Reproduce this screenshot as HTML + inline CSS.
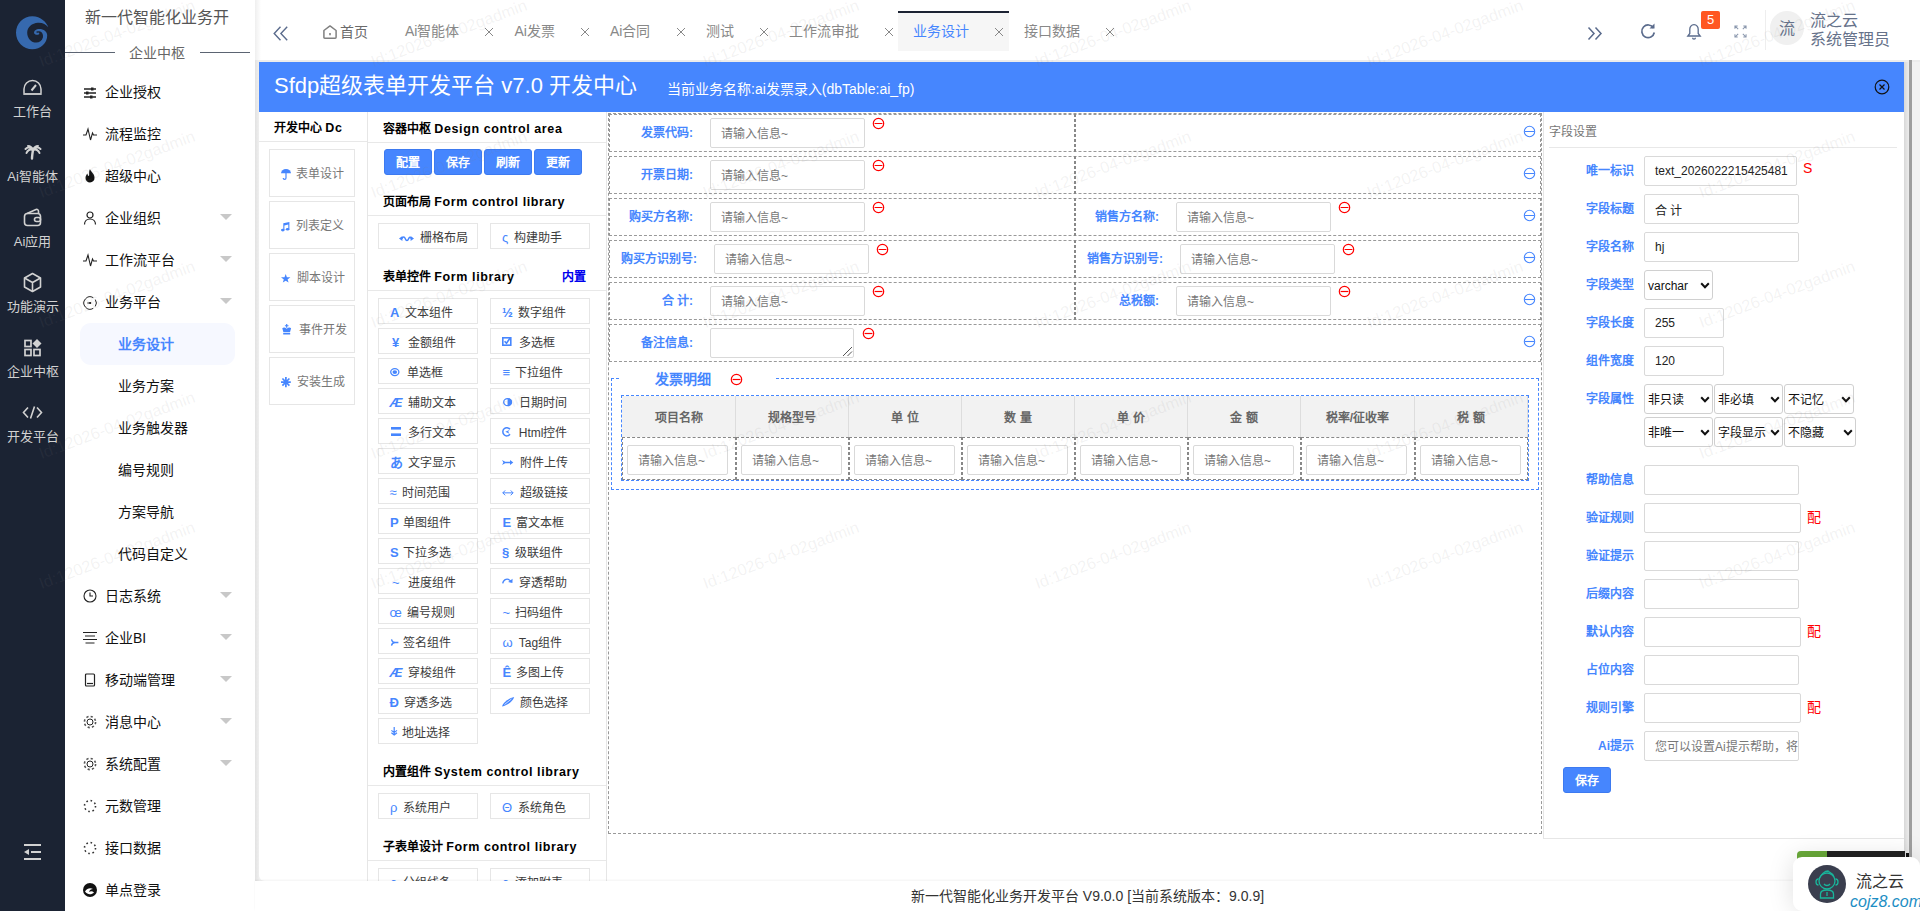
<!DOCTYPE html>
<html lang="zh-CN">
<head>
<meta charset="utf-8">
<title>Sfdp</title>
<style>
*{box-sizing:border-box}
html,body{margin:0;padding:0}
html{overflow:hidden;width:1920px;height:911px}
body{width:1920px;height:911px;overflow:hidden;position:relative;background:#f2f2f2;font-family:"Liberation Sans",sans-serif;font-size:12px;color:#333}
.abs{position:absolute}
svg{display:block;overflow:visible}
/* dark sidebar */
#dark{position:absolute;left:0;top:0;width:65px;height:911px;background:#1b2333}
#dark .it{position:absolute;left:0;width:65px;text-align:center;color:#d2d2d2;font-size:13px;line-height:16px;margin-top:1px;white-space:nowrap}
#dark .ic{position:absolute;left:22px;width:21px;height:21px}
/* second sidebar */
#side2{position:absolute;left:65px;top:0;width:190px;height:911px;background:#fff;overflow:hidden}
#side2 .ttl{position:absolute;left:20px;top:7px;font-size:16px;line-height:22px;color:#555;white-space:nowrap}
#side2 .dv{position:absolute;top:52px;height:1px;background:#5b6472}
#side2 .dvt{position:absolute;left:-3px;width:190px;top:44px;text-align:center;font-size:14px;line-height:18px;color:#666}
.mi{position:absolute;left:0;width:190px;height:42px;line-height:42px;font-size:14px;color:#111;white-space:nowrap}
.mi .t{position:absolute;left:40px;top:0}
.mi.sub .t{left:53px}
.mi .i{position:absolute;left:18px;top:14px;width:14px;height:14px}
.mi .ar{position:absolute;left:155px;top:17px;width:0;height:0;border-left:6px solid transparent;border-right:6px solid transparent;border-top:6px solid #c8c8c8}
.mi.act{color:#4686fe;font-weight:bold}
.mi.act:before{content:"";position:absolute;left:15px;top:0px;width:155px;height:42px;border-radius:11px;background:#f6f8ff}
/* tabs */
#tabs{position:absolute;left:255px;top:0;width:1665px;height:60px;background:#fff}
.tab{position:absolute;top:11px;height:40px;line-height:40px;font-size:14px;color:#888;white-space:nowrap;padding-left:15px}
.tab.on{background:#f6f6f6;color:#4686fe;border-top:2px solid #1c2333;line-height:36px}
.tab .x{position:absolute;right:5px;top:1px;width:10px;height:40px}
.tab.on .x{top:-1px}
/* main */
#main{position:absolute;left:259px;top:62px;width:1645px;height:819px;background:#fff;overflow:hidden;border-radius:0 0 0 6px}
#bar{position:absolute;left:0;top:0;width:1645px;height:50px;background:#4686fe;color:#fff}
.hd{position:absolute;font-weight:bold;font-size:12px;line-height:16px;color:#000;white-space:nowrap}
.hl{position:absolute;height:1px;background:#e8e8e8}
.vl{position:absolute;width:1px;background:#e6e6e6}
.lb{position:absolute;left:10px;width:86px;height:48px;border:1px solid #e6e6e6;line-height:46px;color:#777;font-size:12px;white-space:nowrap}
.lb i{position:absolute;left:11px;top:1px;font-style:normal;color:#4686fe;font-size:12px}
.lb span{position:absolute;left:27px;top:1px}
.bb{position:absolute;top:87px;width:48px;height:26px;background:#4686fe;border:1px solid #3d7af0;border-radius:3px;color:#fff;font-weight:bold;font-size:12px;line-height:26px;text-align:center}
.cb{position:absolute;width:100px;height:26px;border:1px solid #e6e6e6;line-height:24px;font-size:12px;color:#3c3c3c;white-space:nowrap;overflow:hidden}
.cb i{font-style:normal;color:#4686fe;font-size:13px}
.cb i.b{font-weight:bold}
.cb i.n{font-weight:normal;font-size:13px}
.cb i.it{font-style:italic}
.en{font-size:12.500px;letter-spacing:.6px}

#cv{position:absolute;left:349px;top:51px;width:934px;height:721px;border:1px dashed #999}
#cv>*{margin-left:-350px;margin-top:-52px}
.rw{position:absolute;left:350px;width:932px;height:38px;border:1px dashed #999}
.rw .cl{position:absolute;left:-1px;top:-1px;width:466px;height:38px;border-right:1px dashed #888}
.rw .cr{position:absolute;left:465px;top:-1px;width:466px;height:38px;border-left:1px dashed #888}
.fl{position:absolute;width:100px;text-align:right;font-weight:bold;font-size:12px;line-height:16px;color:#4686fe;white-space:nowrap}
.fi{position:absolute;width:155px;height:30px;border:1px solid #d9d9d9;border-radius:2px;background:#fff;font-size:12px;line-height:30px;color:#777;padding-left:10px;white-space:nowrap;overflow:hidden;font-weight:normal}
.fs{position:absolute;left:352px;top:316px;width:928px;height:112px;border:1px dashed #4686fe}
.tb{position:absolute;left:362px;top:333px;width:908px;height:86px;border:1px dashed #4686fe}
.tb .th{position:absolute;top:0;height:41px;background:#f2f2f2;border-right:1px solid #ddd;text-align:center;line-height:44px;font-weight:bold;color:#666;font-size:12px;margin:0}
.tb .td{position:absolute;top:41px;height:43px;border:1px dashed #888;margin:0}


#rp{position:absolute;left:1284px;top:0;width:361px;height:777px;border-left:1px solid #e6e6e6;border-bottom:1px solid #e6e6e6}
#bar{z-index:5}
.rl{position:absolute;left:0;width:90px;margin-top:1px;text-align:right;font-weight:bold;font-size:12px;line-height:16px;color:#4686fe;white-space:nowrap}
.ri{position:absolute;left:100px;height:30px;border:1px solid #d9d9d9;border-radius:2px;background:#fff;font-size:12px;line-height:28px;color:#222;padding-left:10px;white-space:nowrap;overflow:hidden}
.ri.ph{color:#777}
.rs{position:absolute;height:30px;border:1px solid #d0d0d0;border-radius:3px;background:#fff;font-size:12px;line-height:30px;color:#111;padding-left:3px;white-space:nowrap;overflow:hidden}
#foot{position:absolute;left:255px;top:881px;width:1665px;height:30px;background:#fff;text-align:center;font-size:14px;line-height:30px;color:#333;box-shadow:0 -1px 2px rgba(0,0,0,.05)}
.wm{position:absolute;font-size:16.400px;line-height:20px;height:20px;color:rgba(130,130,130,.1);transform:rotate(-20.400deg);transform-origin:0 100%;white-space:nowrap;pointer-events:none;z-index:50}

.ri.cj{line-height:32px}.ri.ph{line-height:30px}
</style>
</head>
<body>
<div id="dark">
<svg class="abs" style="left:15px;top:15px" width="34" height="34" viewBox="0 0 34 34"><path d="M 33.3,12.2 C 31.4,7.3 25.9,1.2 17.4,1.2 C 8.4,1.2 1.0,8.6 1.0,17.7 C 1.0,26.8 8.4,34.2 17.4,34.2 C 25.4,34.2 32.2,28.1 32.2,20.4 C 32.2,16.6 28.7,14.1 24.3,14.1 C 21.0,14.1 18.8,16.1 19.1,18.0 C 19.3,19.6 22.1,20.4 24.0,19.3 C 24.6,18.8 24.3,17.7 23.5,17.4 C 22.6,18.0 21.3,17.7 21.3,16.9 C 21.5,16.1 23.7,16.1 25.4,16.6 C 27.6,17.7 28.4,20.4 27.9,22.6 C 27.0,25.9 24.3,27.6 21.5,27.6 C 16.1,27.6 12.2,23.2 12.2,17.7 C 12.2,12.2 17.1,8.1 22.9,7.8 C 27.6,7.5 30.9,9.5 33.3,12.2 Z" fill="#3669ae"/></svg>
<svg class="ic" style="top:78px" viewBox="0 0 21 21" fill="none" stroke="#d2d2d2" stroke-width="1.500"><path d="M2 15.300V11a8.500 8.500 0 0 1 17 0v4.300"/><path d="M1.300 16h18.400" stroke-width="1.800"/><path d="M9.500 12.500l4.500-5.500" stroke-width="2"/></svg>
<div class="it" style="top:103px">工作台</div>
<svg class="ic" style="top:142px" viewBox="0 0 21 21" fill="none" stroke="#d2d2d2" stroke-width="2" stroke-linecap="round"><path d="M11 8C10.500 11 10 14 10 16.500" stroke-width="2.400"/><path d="M11 8C8.500 5 5.500 5 3.500 7M11 8C8 7 5.500 8 4.500 11M11 8C10 5.500 8 4 6 4M11 8c1-2.500 3-4 5-4M11 8c2.500-3 5.500-3 7.500-1M11 8c3-1 5.500 0 6.500 3"/></svg>
<div class="it" style="top:168px">Ai智能体</div>
<svg class="ic" style="top:207px" viewBox="0 0 21 21" fill="none" stroke="#d2d2d2" stroke-width="1.600"><rect x="2.500" y="6.500" width="16" height="12" rx="3"/><path d="M5 6.500 14 2.500c1.500-.5 2.500.5 2.500 2v2"/><rect x="12.500" y="10.500" width="6" height="4" rx="2"/></svg>
<div class="it" style="top:233px">Ai应用</div>
<svg class="ic" style="top:272px" viewBox="0 0 21 21" fill="none" stroke="#d2d2d2" stroke-width="1.600" stroke-linejoin="round"><path d="M10.500 1.500l8 4.500v9l-8 4.500-8-4.500V6z"/><path d="M2.500 6l8 4.500 8-4.500M10.500 10.500v9"/></svg>
<div class="it" style="top:298px">功能演示</div>
<svg class="ic" style="top:337px" viewBox="0 0 21 21" fill="none" stroke="#d2d2d2" stroke-width="1.700"><rect x="3" y="3.500" width="6" height="6"/><rect x="3" y="12.500" width="6" height="6"/><rect x="12" y="12.500" width="6" height="6"/><path d="M15 2l4.500 4.500L15 11l-4.500-4.500z" fill="#d2d2d2" stroke="none"/></svg>
<div class="it" style="top:363px">企业中枢</div>
<svg class="ic" style="top:402px" viewBox="0 0 21 21" fill="none" stroke="#d2d2d2" stroke-width="1.600"><path d="M6 5.500L1.500 10.500 6 15.500M15 5.500l4.500 5-4.500 5M12.500 4.500l-4 12"/></svg>
<div class="it" style="top:428px">开发平台</div>
<svg class="abs" style="left:23px;top:843px" width="19" height="18" viewBox="0 0 19 18" fill="#d2d2d2"><rect x="1" y="1" width="17" height="2"/><rect x="8" y="8" width="10" height="2"/><rect x="1" y="15" width="17" height="2"/><path d="M1 9l5-3v6z"/></svg>
</div>
<div id="side2">
<div class="ttl">新一代智能化业务开</div>
<div class="dv" style="left:0;width:50px"></div><div class="dv" style="left:135px;width:50px"></div><div class="dvt">企业中枢</div>
<div class="mi" style="top:71px"><svg class="i" style="top:15px" viewBox="0 0 14 14" stroke="#222" fill="none" stroke-width="1.2"><path d="M1 3h12M1 7h12M1 11h12" stroke-width="1.3"/><rect x="8" y="1.500" width="2.500" height="3" fill="#222" stroke="none"/><rect x="3" y="5.500" width="2.500" height="3" fill="#222" stroke="none"/><rect x="7" y="9.500" width="2.500" height="3" fill="#222" stroke="none"/></svg><span class="t">企业授权</span></div>
<div class="mi" style="top:113px"><svg class="i" viewBox="0 0 14 14" stroke="#222" fill="none" stroke-width="1.2"><path d="M0 8h3l2-6 2.500 11 2-7 1 2H14" stroke-width="1.100"/></svg><span class="t">流程监控</span></div>
<div class="mi" style="top:155px"><svg class="i" viewBox="0 0 14 14"><path d="M7 0c.5 2.500 4.500 4.500 4.500 8.500A4.500 4.500 0 0 1 7 13.500 4.500 4.500 0 0 1 2.500 9C2.500 7 3.500 5.500 4.500 4.500 4.500 6 5 7 6 7 6.500 5 5.500 2.500 7 0z" fill="#111"/></svg><span class="t">超级中心</span></div>
<div class="mi" style="top:197px"><svg class="i" viewBox="0 0 14 14" stroke="#222" fill="none" stroke-width="1.2"><circle cx="7" cy="4" r="3"/><path d="M1.500 13.500c0-3.500 2.500-5.500 5.500-5.500s5.500 2 5.500 5.500"/></svg><span class="t">企业组织</span><span class="ar"></span></div>
<div class="mi" style="top:239px"><svg class="i" viewBox="0 0 14 14" stroke="#222" fill="none" stroke-width="1.2"><path d="M0 8h3l2-6 2.500 11 2-7 1 2H14" stroke-width="1.100"/></svg><span class="t">工作流平台</span><span class="ar"></span></div>
<div class="mi" style="top:281px"><svg class="i" style="top:15px" viewBox="0 0 14 14" stroke="#222" fill="none" stroke-width="1.2"><path d="M10.300 1.700A6.200 6.200 0 1 0 10.300 12.300M12.300 3.600A6.200 6.200 0 0 1 12.300 10.400" stroke-width="1"/><path d="M4.300 7h2.700" stroke-width="1"/><circle cx="7.200" cy="7" r="1.100" fill="#111" stroke="none"/></svg><span class="t">业务平台</span><span class="ar"></span></div>
<div class="mi sub act" style="top:323px"><span class="t">业务设计</span></div>
<div class="mi sub" style="top:365px"><span class="t">业务方案</span></div>
<div class="mi sub" style="top:407px"><span class="t">业务触发器</span></div>
<div class="mi sub" style="top:449px"><span class="t">编号规则</span></div>
<div class="mi sub" style="top:491px"><span class="t">方案导航</span></div>
<div class="mi sub" style="top:533px"><span class="t">代码自定义</span></div>
<div class="mi" style="top:575px"><svg class="i" viewBox="0 0 14 14" stroke="#222" fill="none" stroke-width="1.2"><circle cx="7" cy="7" r="6" stroke-width="1.100"/><path d="M7 3.500V7h3" stroke-width="1.100"/></svg><span class="t">日志系统</span><span class="ar"></span></div>
<div class="mi" style="top:617px"><svg class="i" viewBox="0 0 14 14" stroke="#222" fill="none" stroke-width="1.2"><path d="M0 1.500h14M2 5h10M0 8.500h14M2.500 12h9" stroke-width="1.100"/></svg><span class="t">企业BI</span><span class="ar"></span></div>
<div class="mi" style="top:659px"><svg class="i" viewBox="0 0 14 14" stroke="#222" fill="none" stroke-width="1.2"><rect x="2.500" y="1" width="9" height="12" rx="1" stroke-width="1.200"/><path d="M4 10.500h6" stroke-width="1.200"/></svg><span class="t">移动端管理</span><span class="ar"></span></div>
<div class="mi" style="top:701px"><svg class="i" viewBox="0 0 14 14" stroke="#222" fill="none" stroke-width="1.2"><circle cx="7" cy="7" r="3" stroke-width="1"/><circle cx="7" cy="7" r="5.600" stroke-width="1.600" stroke-dasharray="2.200 2.200" stroke="#555"/></svg><span class="t">消息中心</span><span class="ar"></span></div>
<div class="mi" style="top:743px"><svg class="i" viewBox="0 0 14 14" stroke="#222" fill="none" stroke-width="1.2"><circle cx="7" cy="7" r="3" stroke-width="1"/><circle cx="7" cy="7" r="5.600" stroke-width="1.600" stroke-dasharray="2.200 2.200" stroke="#555"/></svg><span class="t">系统配置</span><span class="ar"></span></div>
<div class="mi" style="top:785px"><svg class="i" viewBox="0 0 14 14"><circle cx="7" cy="7" r="5.500" fill="none" stroke="#333" stroke-width="1.600" stroke-dasharray="1.600 2.700"/></svg><span class="t">元数管理</span></div>
<div class="mi" style="top:827px"><svg class="i" viewBox="0 0 14 14"><circle cx="7" cy="7" r="5.500" fill="none" stroke="#333" stroke-width="1.600" stroke-dasharray="1.600 2.700"/></svg><span class="t">接口数据</span></div>
<div class="mi" style="top:869px"><svg class="i" viewBox="0 0 14 14"><circle cx="7" cy="7" r="7" fill="#111"/><path d="M2 8.500c2-3 5-4 8-2.500-2 0-3.500 1-4 3 1.500-1 3.500-1 5 .5-2.500 2.500-6.500 2.500-9-1z" fill="#fff"/></svg><span class="t">单点登录</span></div>
</div>
<div id="tabs">
<svg class="abs" style="left:17.500px;top:25.500px" width="15" height="15" viewBox="0 0 15 15" fill="none" stroke="#5a6b8c" stroke-width="1.400"><path d="M7.500 .8L1.200 7.500l6.300 6.700M14.200 .8L7.900 7.500l6.300 6.700"/></svg>
<svg class="abs" style="left:68px;top:25px" width="14" height="14" viewBox="0 0 14 14" fill="none" stroke="#808080" stroke-width="1.500" stroke-linejoin="round"><path d="M.9 5.500L7 .9l6.100 4.600v6.800q0 .9-.9.900H1.800q-.9 0-.9-.9z"/><path d="M7 8v2.200" stroke-width="1.600"/></svg>
<div class="abs" style="left:85px;top:22px;font-size:14px;line-height:20px;color:#6a6a6a;white-space:nowrap">首页</div>
<div class="tab" style="left:135px;width:109px">Ai智能体<svg class="x" viewBox="0 0 10 40"><path d="M1 16l8 8M9 16l-8 8" stroke="#888" stroke-width="1" fill="none"/></svg></div>
<div class="tab" style="left:244.5px;width:95.5px">Ai发票<svg class="x" viewBox="0 0 10 40"><path d="M1 16l8 8M9 16l-8 8" stroke="#888" stroke-width="1" fill="none"/></svg></div>
<div class="tab" style="left:340px;width:95.5px">Ai合同<svg class="x" viewBox="0 0 10 40"><path d="M1 16l8 8M9 16l-8 8" stroke="#888" stroke-width="1" fill="none"/></svg></div>
<div class="tab" style="left:435.5px;width:83px">测试<svg class="x" viewBox="0 0 10 40"><path d="M1 16l8 8M9 16l-8 8" stroke="#888" stroke-width="1" fill="none"/></svg></div>
<div class="tab" style="left:518.5px;width:125px">工作流审批<svg class="x" viewBox="0 0 10 40"><path d="M1 16l8 8M9 16l-8 8" stroke="#888" stroke-width="1" fill="none"/></svg></div>
<div class="tab on" style="left:643px;width:111px">业务设计<svg class="x" viewBox="0 0 10 40"><path d="M1 16l8 8M9 16l-8 8" stroke="#888" stroke-width="1" fill="none"/></svg></div>
<div class="tab" style="left:754px;width:111px">接口数据<svg class="x" viewBox="0 0 10 40"><path d="M1 16l8 8M9 16l-8 8" stroke="#888" stroke-width="1" fill="none"/></svg></div>
<svg class="abs" style="left:1332px;top:26px" width="16" height="15" viewBox="0 0 16 15" fill="none" stroke="#5a6b8c" stroke-width="1.500"><path d="M1.500 1.500L7 7.500 1.500 13.500M8.500 1.500l5.500 6-5.500 6"/></svg>
<svg class="abs" style="left:1384px;top:22px" width="18" height="18" viewBox="0 0 18 18" fill="none" stroke="#5a6b8c" stroke-width="1.700"><path d="M14.500 6A6.300 6.300 0 1 0 15.300 10.500"/><path d="M15.500 1.500v5h-5z" fill="#5a6b8c" stroke="none"/></svg>
<svg class="abs" style="left:1431px;top:23px" width="16" height="17" viewBox="0 0 16 17" fill="none" stroke="#5a6b8c" stroke-width="1.300"><path d="M8 1.700C5.300 1.700 3.800 3.900 3.800 6.200v4.300L1.800 13h12.400l-2-2.500V6.200c0-2.300-1.500-4.500-4.200-4.500z"/><path d="M6.600 14.700a1.400 1.400 0 0 0 2.800 0"/></svg>
<div class="abs" style="left:1446px;top:11px;width:19px;height:18px;background:#ff5722;border-radius:2px;color:#fff;font-size:13px;line-height:18px;text-align:center">5</div>
<svg class="abs" style="left:1478.500px;top:24.500px" width="13" height="13" viewBox="0 0 14 14" fill="none" stroke="#8a97ad" stroke-width="1.100"><path d="M1 4V1h3M10 1h3v3M13 10v3h-3M4 13H1v-3M1 1l3.500 3.500M13 1L9.500 4.500M13 13L9.500 9.500M1 13l3.500-3.500"/></svg>
<div class="abs" style="left:1510px;top:10px;width:1px;height:40px;background:#eee"></div>
<div class="abs" style="left:1515px;top:11px;width:34px;height:34px;border-radius:17px;background:#f0f0f0;color:#66728a;font-size:16px;line-height:35px;text-align:center">流</div>
<div class="abs" style="left:1555px;top:11px;font-size:16px;line-height:19px;color:#66728a;white-space:nowrap">流之云<br>系统管理员</div>
</div>
<div id="main">
<div id="bar"><div class="abs" style="left:15px;top:10px;font-size:22px;line-height:28px;white-space:nowrap">Sfdp超级表单开发平台 v7.0 开发中心</div><div class="abs" style="left:408px;top:18px;font-size:14px;line-height:18px;white-space:nowrap">当前业务名称:ai发票录入(dbTable:ai_fp)</div><svg class="abs" style="left:1615px;top:17px" width="16" height="16" viewBox="0 0 16 16" fill="none" stroke="#111" stroke-width="1.200"><circle cx="8" cy="8" r="6.800"/><path d="M5.500 5.500l5 5M10.500 5.500l-5 5"/></svg></div>
<div class="hd" style="left:15px;top:58px">开发中心 <span class="en">Dc</span></div>
<div class="hl" style="left:0;top:79px;width:108px"></div><div class="vl" style="left:108px;top:50px;height:769px"></div>
<div class="lb" style="top:87px"><svg class="abs" style="left:11px;top:19px" width="10" height="11" viewBox="0 0 10 11"><path d="M0 4.300a5 4.300 0 0 1 10 0z" fill="#4686fe"/><path d="M5 4v5a1.400 1.400 0 0 1-2.800 0" fill="none" stroke="#4686fe" stroke-width="1.200"/></svg><span style="left:26px">表单设计</span></div>
<div class="lb" style="top:139px"><svg class="abs" style="left:11.400px;top:19.500px" width="8.400" height="9.400" viewBox="0 0 8.400 9.400" fill="#4686fe"><path d="M2.300 1.300L8.400 0v7.300H7.300V2.600L3.400 3.400v4.800H2.300z"/><ellipse cx="1.800" cy="8.100" rx="1.800" ry="1.300"/><ellipse cx="6.600" cy="7.200" rx="1.800" ry="1.300"/></svg><span style="left:26px">列表定义</span></div>
<div class="lb" style="top:191px"><svg class="abs" style="left:11.400px;top:19.500px" width="9.400" height="8.600" viewBox="0 0 9.400 8.600" fill="#4686fe"><path d="M4.700 0l1.200 3.200 3.500.1-2.800 2.100 1 3.200-2.900-1.900-2.900 1.900 1-3.200L0 3.300l3.500-.1z"/></svg><span style="left:26.700000000000003px">脚本设计</span></div>
<div class="lb" style="top:243px"><svg class="abs" style="left:12.400px;top:17.500px" width="9.400" height="10.500" viewBox="0 0 9.400 10.500" fill="#4686fe"><path d="M4.100 0h1.200v1.200h1.200v1.100H5.300v1.400H4.100V2.300H2.900V1.200h1.200zM.3 4.200C1.500 3.200 3.300 3.400 4.700 4.800 6.100 3.400 7.900 3.200 9.100 4.200L8 8.300H1.400zM1.200 8.900h7v1.600h-7z"/></svg><span style="left:29px">事件开发</span></div>
<div class="lb" style="top:295px"><svg class="abs" style="left:11.400px;top:18.700px" width="9.800" height="10.200" viewBox="0 0 9.800 10.200" fill="none" stroke="#4686fe" stroke-width="1.700"><path d="M4.900 0v10.200M0 5.100h9.800M1.400 1.500l7 7.200M8.400 1.500l-7 7.200"/></svg><span style="left:27px">安装生成</span></div>
<div class="hd" style="left:124px;top:59px">容器中枢 <span class="en">Design control area</span></div>
<div class="hl" style="left:109px;top:80px;width:238px"></div><div class="vl" style="left:347px;top:50px;height:769px"></div>
<div class="bb" style="left:125px">配置</div>
<div class="bb" style="left:175px">保存</div>
<div class="bb" style="left:225px">刷新</div>
<div class="bb" style="left:275px">更新</div>
<div class="hd" style="left:124px;top:132px">页面布局 <span class="en">Form control library</span></div><div class="hl" style="left:109px;top:153px;width:238px"></div>
<div class="hd" style="left:124px;top:207px">表单控件 <span class="en">Form library</span></div><div class="hd" style="left:303px;top:207px;color:#0000ee">内置</div><div class="hl" style="left:109px;top:228px;width:238px"></div>
<div class="hd" style="left:124px;top:702px">内置组件 <span class="en">System control library</span></div><div class="hl" style="left:109px;top:723px;width:238px"></div>
<div class="hd" style="left:124px;top:777px">子表单设计 <span class="en">Form control library</span></div><div class="hl" style="left:109px;top:798px;width:238px"></div>
<div class="cb" style="left:119px;top:236px"><i class="abs b" style="left:11px;top:2px">A</i><span class="abs" style="left:25.5px;top:2px">文本组件</span></div>
<div class="cb" style="left:119px;top:266px"><i class="abs b" style="left:13px;top:2px">&yen;</i><span class="abs" style="left:28.5px;top:2px">金额组件</span></div>
<div class="cb" style="left:119px;top:296px"><svg class="abs" style="left:11.4px;top:8.9px" width="9.6" height="8.2" viewBox="0 0 9.6 8.2"><ellipse cx="4.800" cy="4.100" rx="4.100" ry="3.500" fill="none" stroke="#4686fe" stroke-width="1.300"/><ellipse cx="4.800" cy="4.100" rx="2.300" ry="1.900" fill="#4686fe"/></svg><span class="abs" style="left:27.5px;top:2px">单选框</span></div>
<div class="cb" style="left:119px;top:326px"><i class="abs b it" style="left:10.5px;top:2px">&AElig;</i><span class="abs" style="left:28.5px;top:2px">辅助文本</span></div>
<div class="cb" style="left:119px;top:356px"><svg class="abs" style="left:12px;top:8px" width="10" height="9" viewBox="0 0 10 9"><rect x="0" y="0" width="10" height="2.600" fill="#4686fe"/><rect x="0" y="6.400" width="10" height="2.600" fill="#4686fe"/></svg><span class="abs" style="left:28.5px;top:2px">多行文本</span></div>
<div class="cb" style="left:119px;top:386px"><i class="abs b" style="left:11px;top:2px">&#12354;</i><span class="abs" style="left:28.5px;top:2px">文字显示</span></div>
<div class="cb" style="left:119px;top:416px"><i class="abs n" style="left:10.5px;top:2px">&asymp;</i><span class="abs" style="left:23px;top:2px">时间范围</span></div>
<div class="cb" style="left:119px;top:446px"><i class="abs b" style="left:11px;top:2px">P</i><span class="abs" style="left:24px;top:2px">单图组件</span></div>
<div class="cb" style="left:119px;top:476px"><i class="abs b" style="left:11px;top:2px">S</i><span class="abs" style="left:24px;top:2px">下拉多选</span></div>
<div class="cb" style="left:119px;top:506px"><i class="abs n" style="left:13px;top:2px">~</i><span class="abs" style="left:28.5px;top:2px">进度组件</span></div>
<div class="cb" style="left:119px;top:536px"><i class="abs n" style="left:10.5px;top:2px">&oelig;</i><span class="abs" style="left:28px;top:2px">编号规则</span></div>
<div class="cb" style="left:119px;top:566px"><svg class="abs" style="left:11.6px;top:10px" width="7.4" height="7" viewBox="0 0 7.4 7"><path d="M.5 .4C.9 2.700 2.300 3.500 4 3.500H7.400M.5 6.600C.9 4.300 2.300 3.500 4 3.500" fill="none" stroke="#4686fe" stroke-width="1.300"/></svg><span class="abs" style="left:24px;top:2px">签名组件</span></div>
<div class="cb" style="left:119px;top:596px"><i class="abs b it" style="left:10.5px;top:2px">&AElig;</i><span class="abs" style="left:28.5px;top:2px">穿梭组件</span></div>
<div class="cb" style="left:119px;top:626px"><i class="abs b" style="left:10.5px;top:2px">&ETH;</i><span class="abs" style="left:24.5px;top:2px">穿透多选</span></div>
<div class="cb" style="left:119px;top:656px"><svg class="abs" style="left:11.6px;top:8.2px" width="6.4" height="8.8" viewBox="0 0 6.4 8.8"><path d="M3.200 0v7.800M.4 3.400l2.800 2.200L6 3.400M.4 5.800L3.200 8 6 5.800" fill="none" stroke="#4686fe" stroke-width="1.200"/></svg><span class="abs" style="left:23px;top:2px">地址选择</span></div>
<div class="cb" style="left:231px;top:236px"><i class="abs b" style="left:11px;top:2px">&frac12;</i><span class="abs" style="left:26.8px;top:2px">数字组件</span></div>
<div class="cb" style="left:231px;top:266px"><svg class="abs" style="left:11.2px;top:8px" width="9.6" height="9" viewBox="0 0 9.6 9"><rect x=".8" y=".8" width="8" height="7.400" fill="none" stroke="#4686fe" stroke-width="1.600"/><path d="M2.600 4.300l1.900 2 3.800-5.600" fill="none" stroke="#4686fe" stroke-width="1.600"/></svg><span class="abs" style="left:27.8px;top:2px">多选框</span></div>
<div class="cb" style="left:231px;top:296px"><i class="abs n" style="left:11.5px;top:2px">&equiv;</i><span class="abs" style="left:24px;top:2px">下拉组件</span></div>
<div class="cb" style="left:231px;top:326px"><svg class="abs" style="left:11.7px;top:8.5px" width="9.2" height="8.3" viewBox="0 0 9.2 8.3"><ellipse cx="4.600" cy="4.150" rx="3.900" ry="3.500" fill="none" stroke="#4686fe" stroke-width="1.300"/><path d="M4.600 .3a4.300 3.850 0 0 1 0 7.700z" fill="#4686fe"/></svg><span class="abs" style="left:28.4px;top:2px">日期时间</span></div>
<div class="cb" style="left:231px;top:356px"><svg class="abs" style="left:11.2px;top:8px" width="9.4" height="9.6" viewBox="0 0 9.4 9.6"><path d="M8 2.300A4 4.100 0 1 0 8 7.300" fill="none" stroke="#4686fe" stroke-width="1.500"/><path d="M3.300 4.800l4.200-1.900-1.300 1.900 1.300 1.900z" fill="#4686fe"/></svg><span class="abs" style="left:27.8px;top:2px">Html控件</span></div>
<div class="cb" style="left:231px;top:386px"><svg class="abs" style="left:11.2px;top:10.5px" width="11.3" height="5" viewBox="0 0 11.3 5"><path d="M0 0l3.200 1.700H8V0l3.300 2.500L8 5V3.300H3.200L0 5l1.400-2.500z" fill="#4686fe"/></svg><span class="abs" style="left:29px;top:2px">附件上传</span></div>
<div class="cb" style="left:231px;top:416px"><svg class="abs" style="left:10.9px;top:10.7px" width="11.9" height="5.7" viewBox="0 0 11.9 5.7"><path d="M.8 2.850h10.300M3.200 .4L.8 2.850 3.200 5.300M8.700 .4l2.400 2.450L8.700 5.300" fill="none" stroke="#4686fe" stroke-width="1"/></svg><span class="abs" style="left:29px;top:2px">超级链接</span></div>
<div class="cb" style="left:231px;top:446px"><i class="abs b" style="left:11.5px;top:2px">E</i><span class="abs" style="left:25px;top:2px">富文本框</span></div>
<div class="cb" style="left:231px;top:476px"><i class="abs b" style="left:11px;top:2px">&sect;</i><span class="abs" style="left:24px;top:2px">级联组件</span></div>
<div class="cb" style="left:231px;top:506px"><svg class="abs" style="left:11.2px;top:9.2px" width="10.6" height="5.6" viewBox="0 0 10.6 5.6"><path d="M.7 5.300C1.200 2.200 4 .6 6.300 1.300 7.700 1.800 8.600 2.900 9 4" fill="none" stroke="#4686fe" stroke-width="1.400"/><path d="M6.200 3.900l4.200 1.200.2-4.300z" fill="#4686fe"/></svg><span class="abs" style="left:27.8px;top:2px">穿透帮助</span></div>
<div class="cb" style="left:231px;top:536px"><i class="abs n" style="left:11.5px;top:2px">~</i><span class="abs" style="left:24px;top:2px">扫码组件</span></div>
<div class="cb" style="left:231px;top:566px"><i class="abs n" style="left:11.5px;top:2px">&omega;</i><span class="abs" style="left:27.8px;top:2px">Tag组件</span></div>
<div class="cb" style="left:231px;top:596px"><i class="abs b" style="left:11.5px;top:2px">&Ecirc;</i><span class="abs" style="left:25px;top:2px">多图上传</span></div>
<div class="cb" style="left:231px;top:626px"><svg class="abs" style="left:10.9px;top:7.6px" width="12.2" height="9.4" viewBox="0 0 12.2 9.4"><path d="M0 9.400C1 6 5.500 1.600 12.200 0 10.500 5 5 8.500 0 9.400z" fill="#4686fe"/><path d="M2.500 7.500L9.500 2" stroke="#fff" stroke-width=".7"/></svg><span class="abs" style="left:29px;top:2px">颜色选择</span></div>
<div class="cb" style="left:119px;top:161px"><svg class="abs" style="left:20.3px;top:11.8px" width="15" height="5" viewBox="0 0 15 5"><path d="M0 2.500L3.400 0v5zM15 2.500L11.600 5V0z" fill="#4686fe"/><path d="M3 2.700c.9-2.300 2.400-2.300 3.300 0s2.400 2.300 3.300 0 1.600-1.600 2.400-.2" fill="none" stroke="#4686fe" stroke-width="1.500"/></svg><span class="abs" style="left:40.5px;top:2px">栅格布局</span></div>
<div class="cb" style="left:231px;top:161px"><i class="abs n" style="left:11px;top:2px">&sigmaf;</i><span class="abs" style="left:23px;top:2px">构建助手</span></div>
<div class="cb" style="left:119px;top:731px"><i class="abs n" style="left:11px;top:2px">&rho;</i><span class="abs" style="left:24px;top:2px">系统用户</span></div>
<div class="cb" style="left:231px;top:731px"><i class="abs n" style="left:11px;top:2px">&Theta;</i><span class="abs" style="left:26.8px;top:2px">系统角色</span></div>
<div class="cb" style="left:119px;top:806px"><i class="abs n" style="left:11px;top:2px">&sigmaf;</i><span class="abs" style="left:24px;top:2px">分组线条</span></div>
<div class="cb" style="left:231px;top:806px"><i class="abs n" style="left:11px;top:2px">&sigmaf;</i><span class="abs" style="left:24px;top:2px">添加附表</span></div>
<div id="cv">
<div class="rw" style="top:52px"><div class="cl"></div><div class="cr"></div></div>
<div class="fl" style="left:334px;top:63px">发票代码:</div><div class="fi" style="left:451px;top:56px">请输入信息~</div><svg class="abs" style="left:613.4px;top:54.9px" width="13" height="13" viewBox="0 0 13 13" fill="none" stroke="#ff0000" stroke-width="1.200"><circle cx="6.500" cy="6.500" r="5.200"/><path d="M2.600 6.500h7.800"/></svg>
<svg class="abs" style="left:1264.3px;top:62.8px" width="13" height="13" viewBox="0 0 13 13" fill="none" stroke="#4686fe" stroke-width="1.100"><circle cx="6.500" cy="6.500" r="5.200"/><path d="M2 6.500h9"/></svg>
<div class="rw" style="top:94px"><div class="cl"></div><div class="cr"></div></div>
<div class="fl" style="left:334px;top:105px">开票日期:</div><div class="fi" style="left:451px;top:98px">请输入信息~</div><svg class="abs" style="left:613.4px;top:96.9px" width="13" height="13" viewBox="0 0 13 13" fill="none" stroke="#ff0000" stroke-width="1.200"><circle cx="6.500" cy="6.500" r="5.200"/><path d="M2.600 6.500h7.800"/></svg>
<svg class="abs" style="left:1264.3px;top:104.8px" width="13" height="13" viewBox="0 0 13 13" fill="none" stroke="#4686fe" stroke-width="1.100"><circle cx="6.500" cy="6.500" r="5.200"/><path d="M2 6.500h9"/></svg>
<div class="rw" style="top:136px"><div class="cl"></div><div class="cr"></div></div>
<div class="fl" style="left:334px;top:147px">购买方名称:</div><div class="fi" style="left:451px;top:140px">请输入信息~</div><svg class="abs" style="left:613.4px;top:138.9px" width="13" height="13" viewBox="0 0 13 13" fill="none" stroke="#ff0000" stroke-width="1.200"><circle cx="6.500" cy="6.500" r="5.200"/><path d="M2.600 6.500h7.800"/></svg>
<div class="fl" style="left:800px;top:147px">销售方名称:</div><div class="fi" style="left:917px;top:140px">请输入信息~</div><svg class="abs" style="left:1079.4px;top:138.9px" width="13" height="13" viewBox="0 0 13 13" fill="none" stroke="#ff0000" stroke-width="1.200"><circle cx="6.500" cy="6.500" r="5.200"/><path d="M2.600 6.500h7.800"/></svg>
<svg class="abs" style="left:1264.3px;top:146.8px" width="13" height="13" viewBox="0 0 13 13" fill="none" stroke="#4686fe" stroke-width="1.100"><circle cx="6.500" cy="6.500" r="5.200"/><path d="M2 6.500h9"/></svg>
<div class="rw" style="top:178px"><div class="cl"></div><div class="cr"></div></div>
<div class="fl" style="left:338px;top:189px">购买方识别号:</div><div class="fi" style="left:455px;top:182px">请输入信息~</div><svg class="abs" style="left:617.4px;top:180.9px" width="13" height="13" viewBox="0 0 13 13" fill="none" stroke="#ff0000" stroke-width="1.200"><circle cx="6.500" cy="6.500" r="5.200"/><path d="M2.600 6.500h7.800"/></svg>
<div class="fl" style="left:804px;top:189px">销售方识别号:</div><div class="fi" style="left:921px;top:182px">请输入信息~</div><svg class="abs" style="left:1083.4px;top:180.9px" width="13" height="13" viewBox="0 0 13 13" fill="none" stroke="#ff0000" stroke-width="1.200"><circle cx="6.500" cy="6.500" r="5.200"/><path d="M2.600 6.500h7.800"/></svg>
<svg class="abs" style="left:1264.3px;top:188.8px" width="13" height="13" viewBox="0 0 13 13" fill="none" stroke="#4686fe" stroke-width="1.100"><circle cx="6.500" cy="6.500" r="5.200"/><path d="M2 6.500h9"/></svg>
<div class="rw" style="top:220px"><div class="cl"></div><div class="cr"></div></div>
<div class="fl" style="left:334px;top:231px">合 计:</div><div class="fi" style="left:451px;top:224px">请输入信息~</div><svg class="abs" style="left:613.4px;top:222.9px" width="13" height="13" viewBox="0 0 13 13" fill="none" stroke="#ff0000" stroke-width="1.200"><circle cx="6.500" cy="6.500" r="5.200"/><path d="M2.600 6.500h7.800"/></svg>
<div class="fl" style="left:800px;top:231px">总税额:</div><div class="fi" style="left:917px;top:224px">请输入信息~</div><svg class="abs" style="left:1079.4px;top:222.9px" width="13" height="13" viewBox="0 0 13 13" fill="none" stroke="#ff0000" stroke-width="1.200"><circle cx="6.500" cy="6.500" r="5.200"/><path d="M2.600 6.500h7.800"/></svg>
<svg class="abs" style="left:1264.3px;top:230.8px" width="13" height="13" viewBox="0 0 13 13" fill="none" stroke="#4686fe" stroke-width="1.100"><circle cx="6.500" cy="6.500" r="5.200"/><path d="M2 6.500h9"/></svg>
<div class="rw" style="top:262px"></div>
<div class="fl" style="left:334px;top:273px">备注信息:</div>
<div class="fi" style="left:451px;top:266px;width:144px"><svg class="abs" style="right:1px;bottom:1px" width="9" height="9" viewBox="0 0 9 9" stroke="#555" stroke-width="1" fill="none"><path d="M0 9L9 0M4.500 9L9 4.500"/></svg></div>
<svg class="abs" style="left:602.5px;top:264.9px" width="13" height="13" viewBox="0 0 13 13" fill="none" stroke="#ff0000" stroke-width="1.200"><circle cx="6.500" cy="6.500" r="5.200"/><path d="M2.600 6.500h7.800"/></svg>
<svg class="abs" style="left:1264.3px;top:272.8px" width="13" height="13" viewBox="0 0 13 13" fill="none" stroke="#4686fe" stroke-width="1.100"><circle cx="6.500" cy="6.500" r="5.200"/><path d="M2 6.500h9"/></svg>
<div class="fs"></div><div class="abs" style="left:360px;top:308px;width:157px;height:16px;background:#fff"></div>
<div class="abs" style="left:396px;top:308px;font-size:14px;font-weight:bold;line-height:18px;color:#4686fe;white-space:nowrap">发票明细</div>
<svg class="abs" style="left:471px;top:311px" width="13" height="13" viewBox="0 0 13 13" fill="none" stroke="#ff0000" stroke-width="1.200"><circle cx="6.500" cy="6.500" r="5.200"/><path d="M2.600 6.500h7.800"/></svg>
<div class="tb">
<div class="th" style="left:0px;width:114px">项目名称</div>
<div class="td" style="left:0px;width:114px"><div class="fi" style="left:4px;top:7px;width:101px">请输入信息~</div></div>
<div class="th" style="left:114px;width:113px">规格型号</div>
<div class="td" style="left:114px;width:113px"><div class="fi" style="left:4px;top:7px;width:101px">请输入信息~</div></div>
<div class="th" style="left:227px;width:113px">单 位</div>
<div class="td" style="left:227px;width:113px"><div class="fi" style="left:4px;top:7px;width:101px">请输入信息~</div></div>
<div class="th" style="left:340px;width:113px">数 量</div>
<div class="td" style="left:340px;width:113px"><div class="fi" style="left:4px;top:7px;width:101px">请输入信息~</div></div>
<div class="th" style="left:453px;width:113px">单 价</div>
<div class="td" style="left:453px;width:113px"><div class="fi" style="left:4px;top:7px;width:101px">请输入信息~</div></div>
<div class="th" style="left:566px;width:113px">金 额</div>
<div class="td" style="left:566px;width:113px"><div class="fi" style="left:4px;top:7px;width:101px">请输入信息~</div></div>
<div class="th" style="left:679px;width:114px">税率/征收率</div>
<div class="td" style="left:679px;width:114px"><div class="fi" style="left:4px;top:7px;width:101px">请输入信息~</div></div>
<div class="th" style="left:793px;width:113px">税 额</div>
<div class="td" style="left:793px;width:113px"><div class="fi" style="left:4px;top:7px;width:101px">请输入信息~</div></div>
</div>
</div>
<div id="rp">
<div class="abs" style="left:5px;top:62px;font-size:12px;line-height:16px;color:#777">字段设置</div><div class="hl" style="left:5px;top:85px;width:348px"></div>
<div class="rl" style="top:99.5px">唯一标识</div>
<div class="ri" style="top:94px;width:153px">text_2026022215425481</div>
<div class="rl" style="top:137.5px">字段标题</div>
<div class="ri cj" style="top:132px;width:155px">合 计</div>
<div class="rl" style="top:175.5px">字段名称</div>
<div class="ri" style="top:170px;width:155px">hj</div>
<div class="abs" style="left:259px;top:97px;font-size:14px;line-height:18px;color:#ff0000">S</div>
<div class="rl" style="top:213.5px">字段类型</div>
<div class="rs" style="left:100px;top:208px;width:69px">varchar<svg class="abs" style="right:2.500px;top:10.500px" width="10" height="7" viewBox="0 0 10 7" fill="none" stroke="#111" stroke-width="2"><path d="M1.200 1.200L5 5.200 8.800 1.200"/></svg></div>
<div class="rl" style="top:251.5px">字段长度</div>
<div class="ri" style="top:246px;width:80px">255</div>
<div class="rl" style="top:289.5px">组件宽度</div>
<div class="ri" style="top:284px;width:80px">120</div>
<div class="rl" style="top:327.5px">字段属性</div>
<div class="rs" style="left:100px;top:322px;width:69px">非只读<svg class="abs" style="right:2.500px;top:10.500px" width="10" height="7" viewBox="0 0 10 7" fill="none" stroke="#111" stroke-width="2"><path d="M1.200 1.200L5 5.200 8.800 1.200"/></svg></div>
<div class="rs" style="left:170px;top:322px;width:69px">非必填<svg class="abs" style="right:2.500px;top:10.500px" width="10" height="7" viewBox="0 0 10 7" fill="none" stroke="#111" stroke-width="2"><path d="M1.200 1.200L5 5.200 8.800 1.200"/></svg></div>
<div class="rs" style="left:240px;top:322px;width:70px">不记忆<svg class="abs" style="right:2.500px;top:10.500px" width="10" height="7" viewBox="0 0 10 7" fill="none" stroke="#111" stroke-width="2"><path d="M1.200 1.200L5 5.200 8.800 1.200"/></svg></div>
<div class="rs" style="left:100px;top:355px;width:69px">非唯一<svg class="abs" style="right:2.500px;top:10.500px" width="10" height="7" viewBox="0 0 10 7" fill="none" stroke="#111" stroke-width="2"><path d="M1.200 1.200L5 5.200 8.800 1.200"/></svg></div>
<div class="rs" style="left:170px;top:355px;width:69px">字段显示<svg class="abs" style="right:2.500px;top:10.500px" width="10" height="7" viewBox="0 0 10 7" fill="none" stroke="#111" stroke-width="2"><path d="M1.200 1.200L5 5.200 8.800 1.200"/></svg></div>
<div class="rs" style="left:240px;top:355px;width:72px">不隐藏<svg class="abs" style="right:2.500px;top:10.500px" width="10" height="7" viewBox="0 0 10 7" fill="none" stroke="#111" stroke-width="2"><path d="M1.200 1.200L5 5.200 8.800 1.200"/></svg></div>
<div class="rl" style="top:408.5px">帮助信息</div>
<div class="ri" style="top:403px;width:155px"></div>
<div class="rl" style="top:446.5px">验证规则</div>
<div class="ri" style="top:441px;width:157px"></div>
<div class="abs" style="left:263px;top:446px;font-size:14px;line-height:18px;color:#ff0000">配</div>
<div class="rl" style="top:484.5px">验证提示</div>
<div class="ri" style="top:479px;width:155px"></div>
<div class="rl" style="top:522.5px">后缀内容</div>
<div class="ri" style="top:517px;width:155px"></div>
<div class="rl" style="top:560.5px">默认内容</div>
<div class="ri" style="top:555px;width:157px"></div>
<div class="abs" style="left:263px;top:560px;font-size:14px;line-height:18px;color:#ff0000">配</div>
<div class="rl" style="top:598.5px">占位内容</div>
<div class="ri" style="top:593px;width:155px"></div>
<div class="rl" style="top:636.5px">规则引擎</div>
<div class="ri" style="top:631px;width:157px"></div>
<div class="abs" style="left:263px;top:636px;font-size:14px;line-height:18px;color:#ff0000">配</div>
<div class="rl" style="top:675px">Ai提示</div>
<div class="ri ph cj" style="top:669px;width:155px">您可以设置Ai提示帮助，将</div>
<div class="bb" style="left:19px;top:705px">保存</div>
</div>
</div>
<div class="abs" id="tabs-left-grad" style="left:255px;top:0;width:6px;height:60px;background:linear-gradient(90deg,#efefef,#fff)"></div>
<div class="abs" style="left:255px;top:60px;width:1665px;height:2px;background:#ececec"></div>
<div class="abs" style="left:255px;top:60px;width:4px;height:821px;background:linear-gradient(90deg,#e2e2e2,#efefef)"></div>
<div class="abs" style="left:1904px;top:62px;width:5px;height:819px;background:linear-gradient(90deg,#d8d8d8,#ececec)"></div>
<div class="abs" style="left:1909px;top:60px;width:3px;height:821px;background:#9e9e9e"></div>
<div id="foot"><span style="position:relative;left:0px">新一代智能化业务开发平台 V9.0.0 [当前系统版本：9.0.9]</span></div>
<div class="abs" style="left:1797px;top:851px;width:30px;height:10px;background:#6aaa3a;border-radius:4px 0 0 0"></div>
<div class="abs" style="left:1827px;top:851px;width:78px;height:10px;background:#222"></div>
<div class="abs" style="left:1906px;top:853px;width:3px;height:8px;background:#111"></div>
<div class="abs" style="left:1793px;top:857px;width:127px;height:54px;background:#fff;border-radius:9px 9px 0 9px;box-shadow:0 0 26px rgba(0,0,0,.13)">
<svg class="abs" style="left:15px;top:8px" width="38" height="38" viewBox="0 0 38 38" fill="none" stroke="#19b59b" stroke-width="1.300"><circle cx="19" cy="19" r="19" fill="#3a3e4e" stroke="none"/><circle cx="19" cy="16" r="8"/><path d="M11 14c2-5 6-8 9-8 0 1 4 1 6 6"/><path d="M10.500 14a2.500 3 0 0 0 0 6M27.500 14a2.500 3 0 0 1 0 6"/><path d="M16 19c1.500 2 4.500 2 6 0"/><path d="M12.500 33v-4c0-3 3-4 6.500-4s6.500 1 6.500 4v4z"/><path d="M19 27v4"/></svg>
<div class="abs" style="left:63px;top:14px;font-size:16px;line-height:22px;color:#333;white-space:nowrap">流之云</div>
<div class="abs" style="left:57px;top:35px;font-size:16px;line-height:20px;color:#1d8ec4;font-style:italic;white-space:nowrap">cojz8.com</div>
</div>
<div class="wm" style="left:42.8px;top:51.0px">Id:12026-04-02gadmin</div>
<div class="wm" style="left:374.8px;top:51.0px">Id:12026-04-02gadmin</div>
<div class="wm" style="left:706.8px;top:51.0px">Id:12026-04-02gadmin</div>
<div class="wm" style="left:1038.8px;top:51.0px">Id:12026-04-02gadmin</div>
<div class="wm" style="left:1370.8px;top:51.0px">Id:12026-04-02gadmin</div>
<div class="wm" style="left:1702.8px;top:51.0px">Id:12026-04-02gadmin</div>
<div class="wm" style="left:42.8px;top:181.5px">Id:12026-04-02gadmin</div>
<div class="wm" style="left:374.8px;top:181.5px">Id:12026-04-02gadmin</div>
<div class="wm" style="left:706.8px;top:181.5px">Id:12026-04-02gadmin</div>
<div class="wm" style="left:1038.8px;top:181.5px">Id:12026-04-02gadmin</div>
<div class="wm" style="left:1370.8px;top:181.5px">Id:12026-04-02gadmin</div>
<div class="wm" style="left:1702.8px;top:181.5px">Id:12026-04-02gadmin</div>
<div class="wm" style="left:42.8px;top:312.0px">Id:12026-04-02gadmin</div>
<div class="wm" style="left:374.8px;top:312.0px">Id:12026-04-02gadmin</div>
<div class="wm" style="left:706.8px;top:312.0px">Id:12026-04-02gadmin</div>
<div class="wm" style="left:1038.8px;top:312.0px">Id:12026-04-02gadmin</div>
<div class="wm" style="left:1370.8px;top:312.0px">Id:12026-04-02gadmin</div>
<div class="wm" style="left:1702.8px;top:312.0px">Id:12026-04-02gadmin</div>
<div class="wm" style="left:42.8px;top:442.5px">Id:12026-04-02gadmin</div>
<div class="wm" style="left:374.8px;top:442.5px">Id:12026-04-02gadmin</div>
<div class="wm" style="left:706.8px;top:442.5px">Id:12026-04-02gadmin</div>
<div class="wm" style="left:1038.8px;top:442.5px">Id:12026-04-02gadmin</div>
<div class="wm" style="left:1370.8px;top:442.5px">Id:12026-04-02gadmin</div>
<div class="wm" style="left:1702.8px;top:442.5px">Id:12026-04-02gadmin</div>
<div class="wm" style="left:42.8px;top:573.0px">Id:12026-04-02gadmin</div>
<div class="wm" style="left:374.8px;top:573.0px">Id:12026-04-02gadmin</div>
<div class="wm" style="left:706.8px;top:573.0px">Id:12026-04-02gadmin</div>
<div class="wm" style="left:1038.8px;top:573.0px">Id:12026-04-02gadmin</div>
<div class="wm" style="left:1370.8px;top:573.0px">Id:12026-04-02gadmin</div>
<div class="wm" style="left:1702.8px;top:573.0px">Id:12026-04-02gadmin</div>
</body>
</html>
